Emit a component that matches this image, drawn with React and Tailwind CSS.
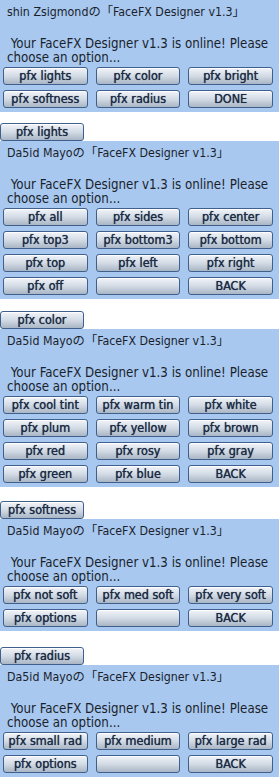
import React from "react";

const FONT = { fontFamily: '"DejaVu Sans Condensed", "DejaVu Sans", "Noto Sans CJK JP", sans-serif' };

function Btn({ label, className = "" }) {
  return (
    <div
      className={
        "h-[18px] rounded-[3px] border border-[#3f5f8c] bg-gradient-to-b from-[#f2f5f9] via-[#d3dbe5] to-[#aab6c5] shadow-[inset_0_1px_0_#ffffff] flex items-center justify-center text-[12.5px] font-normal leading-none text-[#1d2b46] [text-shadow:0_0_0.7px_#1d2b46] whitespace-nowrap overflow-hidden " +
        className
      }
    >
      {label}
    </div>
  );
}

function Panel({ name, buttons }) {
  return (
    <div className="bg-[#a8c8f0] pt-[5px] pb-[4px]">
      <div className="pl-[7px] text-[12.3px] leading-[14px] text-[#1a1f2b] whitespace-nowrap">
        {name}の「FaceFX Designer v1.3」
      </div>
      <div className="mt-[18px] pl-[7px] text-[13.2px] leading-[14px] text-[#1a1f2b]">
        <div className="whitespace-pre"> Your FaceFX Designer v1.3 is online! Please</div>
        <div>choose an option...</div>
      </div>
      <div className="mt-[2px] grid grid-cols-3 gap-x-[8px] gap-y-[5px] pl-[3px] pr-[6px]">
        {buttons.map((b, i) => (
          <Btn key={i} label={b} />
        ))}
      </div>
    </div>
  );
}

function Tab({ label }) {
  return (
    <div className="w-[84px]">
      <Btn label={label} className="h-[17px]" />
    </div>
  );
}

export default function App() {
  return (
    <div className="w-[279px] h-[778px] bg-white overflow-hidden" style={FONT}>
      <Panel
        name="shin Zsigmond"
        buttons={["pfx lights", "pfx color", "pfx bright", "pfx softness", "pfx radius", "DONE"]}
      />
      <div className="pt-[11px]">
        <Tab label="pfx lights" />
      </div>
      <Panel
        name="Da5id Mayo"
        buttons={[
          "pfx all",
          "pfx sides",
          "pfx center",
          "pfx top3",
          "pfx bottom3",
          "pfx bottom",
          "pfx top",
          "pfx left",
          "pfx right",
          "pfx off",
          "",
          "BACK",
        ]}
      />
      <div className="pt-[12px]">
        <Tab label="pfx color" />
      </div>
      <Panel
        name="Da5id Mayo"
        buttons={[
          "pfx cool tint",
          "pfx warm tin",
          "pfx white",
          "pfx plum",
          "pfx yellow",
          "pfx brown",
          "pfx red",
          "pfx rosy",
          "pfx gray",
          "pfx green",
          "pfx blue",
          "BACK",
        ]}
      />
      <div className="pt-[14px]">
        <Tab label="pfx softness" />
      </div>
      <Panel
        name="Da5id Mayo"
        buttons={["pfx not soft", "pfx med soft", "pfx very soft", "pfx options", "", "BACK"]}
      />
      <div className="pt-[16px]">
        <Tab label="pfx radius" />
      </div>
      <Panel
        name="Da5id Mayo"
        buttons={["pfx small rad", "pfx medium", "pfx large rad", "pfx options", "", "BACK"]}
      />
    </div>
  );
}
